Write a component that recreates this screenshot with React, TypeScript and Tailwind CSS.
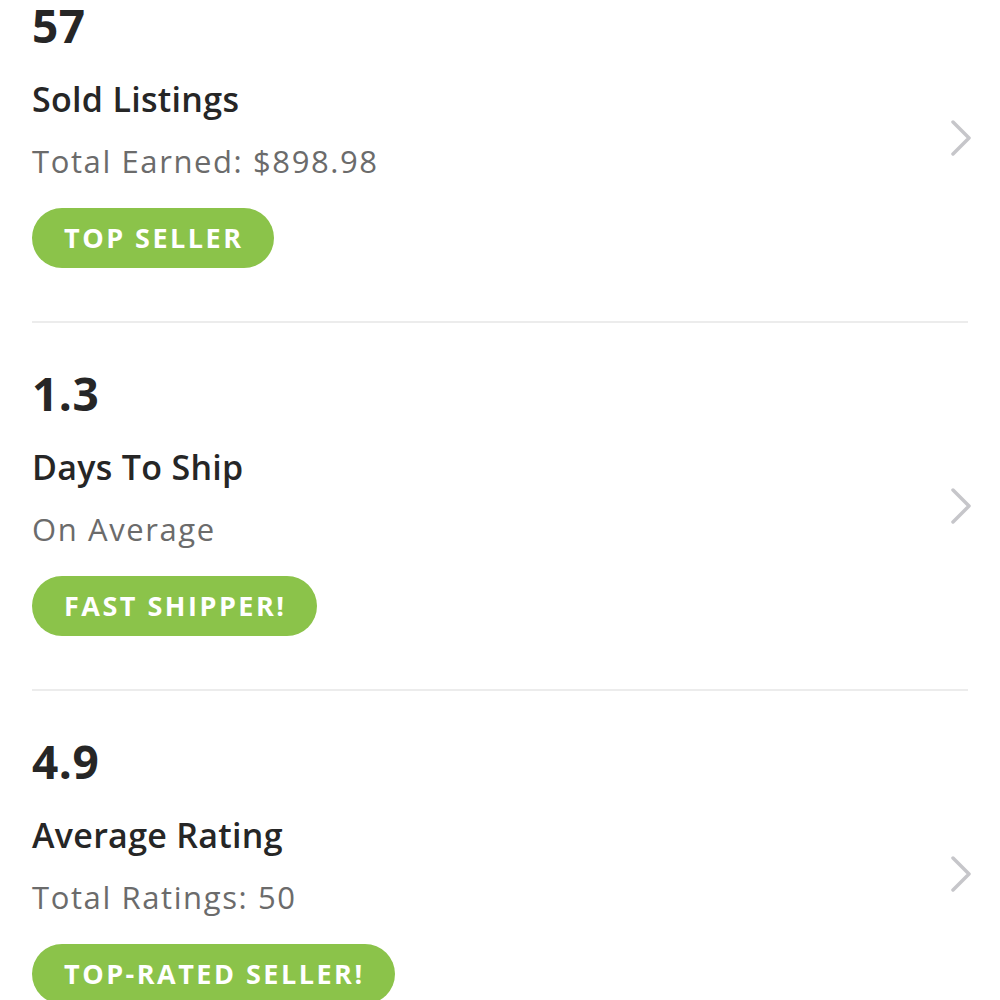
const stats = [
  { value: "57", title: "Sold Listings", sub: "Total Earned: $898.98", badge: "TOP SELLER" },
  { value: "1.3", title: "Days To Ship", sub: "On Average", badge: "FAST SHIPPER!" },
  { value: "4.9", title: "Average Rating", sub: "Total Ratings: 50", badge: "TOP-RATED SELLER!" },
];

function Chevron() {
  return (
    <svg width="22" height="36" viewBox="0 0 22 36" fill="none" className="shrink-0 -mr-[4px]">
      <path d="M3 2 L19 18 L3 34" stroke="#c6c6ca" strokeWidth="3.5" strokeLinecap="round" strokeLinejoin="round" />
    </svg>
  );
}

export default function App() {
  return (
    <div className="w-[1000px] h-[1000px] overflow-hidden bg-white font-['Open_Sans','Noto_Sans',sans-serif]">
      <div className="-mt-[45px] px-[32px]">
        {stats.map((s) => (
          <div key={s.title} className="flex items-center justify-between border-b-2 border-[#ececec]">
            <div className="flex flex-col items-start pt-[47px] pb-[53px]">
              <div className="text-[46px] leading-[46px] font-bold tracking-[0.5px] text-[#262626]">{s.value}</div>
              <div className="mt-[34px] text-[34px] leading-[34px] font-semibold tracking-[0.3px] text-[#262626]">{s.title}</div>
              <div className="mt-[30px] text-[31px] leading-[31px] tracking-[1.6px] text-[#6b6b6b]">{s.sub}</div>
              <div className="mt-[31px] h-[60px] flex items-center rounded-full bg-[#8bc34a] pl-[32px] pr-[30px] text-[27px] font-bold tracking-[2.5px] text-white">
                {s.badge}
              </div>
            </div>
            <Chevron />
          </div>
        ))}
      </div>
    </div>
  );
}
